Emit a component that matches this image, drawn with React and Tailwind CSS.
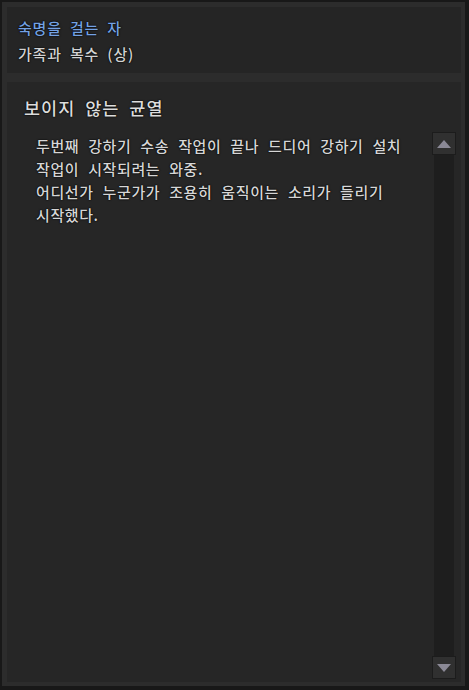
import React from "react";

const font = { fontFamily: '"Noto Sans CJK KR", "Noto Sans", sans-serif' };

function Tri({ down }) {
  return (
    <svg width="16" height="10" viewBox="0 0 16 10">
      {down ? (
        <polygon points="1,1 15,1 8,9" fill="#8b8996" />
      ) : (
        <polygon points="8,1 15,9 1,9" fill="#8b8996" />
      )}
    </svg>
  );
}

export default function App() {
  return (
    <div
      style={font}
      className="w-[469px] h-[690px] bg-[#2c2c2c] border-[#181818] border-l-2 border-t-2 border-r-4 border-b-4 pl-[5px] pt-[5px] pr-[4px] pb-[4px] flex flex-col gap-[9px] font-medium [text-shadow:0_0_2px_#000,0_0_1px_#000]"
    >
      <div className="h-[66px] bg-[#252525] pl-[11px] pt-[8px] text-[15px] leading-[26px] tracking-[0.8px] [word-spacing:4px]">
        <div className="text-[#74a2e4]">숙명을 걸는 자</div>
        <div className="text-[#d2d2d2]">가족과 복수 (상)</div>
      </div>
      <div className="flex-1 bg-[#262626] flex flex-col">
        <div className="pt-[14px] pl-[17px] h-[38px] text-[17.5px] leading-[24px] text-[#dcdcdc] tracking-[1px] [word-spacing:5px]">
          보이지 않는 균열
        </div>
        <div className="flex-1 flex flex-row">
          <div className="flex-1 pl-[29px] pt-[14px] text-[15px] leading-[23px] text-[#d6d6d6] tracking-[0.6px] [word-spacing:5px] whitespace-nowrap">
            <div>두번째 강하기 수송 작업이 끝나 드디어 강하기 설치</div>
            <div>작업이 시작되려는 와중.</div>
            <div>어디선가 누군가가 조용히 움직이는 소리가 들리기</div>
            <div>시작했다.</div>
          </div>
          <div className="w-[24px] mt-[12px] mb-[3px] mr-[5px] flex flex-col items-center">
            <div className="w-[24px] h-[23px] bg-[#303030] border border-[#1c1c1c] flex items-center justify-center">
              <Tri />
            </div>
            <div className="flex-1 w-[20px] bg-[#1e1e1e]" />
            <div className="w-[24px] h-[23px] bg-[#303030] border border-[#1c1c1c] flex items-center justify-center">
              <Tri down />
            </div>
          </div>
        </div>
      </div>
    </div>
  );
}
